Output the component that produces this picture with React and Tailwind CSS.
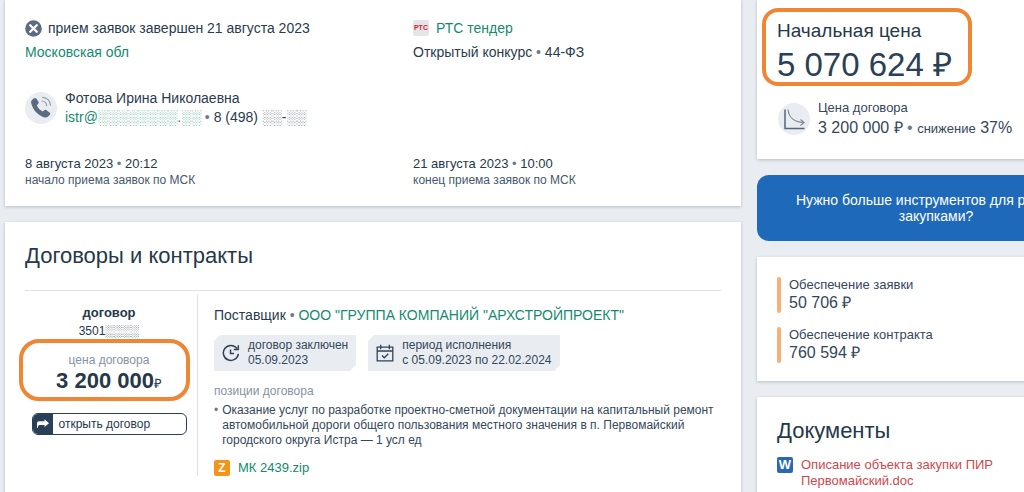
import React from "react";

function Card({ className = "", children }) {
  return (
    <section className={`bg-white shadow-[0_1px_3px_rgba(60,80,100,0.3)] ${className}`}>{children}</section>
  );
}

function Dot() {
  return <span className="text-[#6b7a8c]">•</span>;
}

function CloseIcon() {
  return (
    <svg viewBox="0 0 17 17" className="size-[17px] shrink-0" aria-hidden="true">
      <circle cx="8.5" cy="8.5" r="8.3" fill="#5b6b80" />
      <path d="M5.2 5.2l6.6 6.6M11.8 5.2l-6.6 6.6" stroke="#fff" strokeWidth="2.3" strokeLinecap="round" />
    </svg>
  );
}

function PhoneIcon() {
  return (
    <svg viewBox="0 0 32 32" className="size-8 shrink-0" aria-hidden="true">
      <circle cx="16" cy="16" r="16" fill="#e9edf2" />
      <path
        d="M8.600 6.600c1-1 2.100-.9 2.800.1l1.900 2.900c.6 1 .4 1.800-.4 2.600l-1.100 1.100c1.200 2.700 3.200 4.900 5.900 6.300l1.300-1.200c.8-.7 1.600-.8 2.500-.2l3 2.200c1 .8 1 1.800.1 2.700l-1.500 1.500c-1 1-2.600 1.300-4.300.7C12.700 23 7.900 18 6.300 11.600c-.4-1.600-.2-2.800.7-3.600z"
        fill="#5b6b80"
      />
      <path d="M17 9c2.600.2 4.400 2 4.700 4.600M17.500 5.300c4.400.3 7.500 3.400 7.900 7.900" fill="none" stroke="#98a3b1" strokeWidth="1.200" strokeLinecap="round" />
    </svg>
  );
}

function DeclineIcon() {
  return (
    <svg viewBox="0 0 32 32" className="size-8 shrink-0" aria-hidden="true">
      <circle cx="16" cy="16" r="16" fill="#e9edf2" />
      <path d="M7 6.500V25.500h19.500" fill="none" stroke="#55657a" strokeWidth="1.500" />
      <path d="M10 6.500C11 14.500 15 19 25.500 19.500M22.500 16.500l3.500 3-3.500 3" fill="none" stroke="#7d8a9b" strokeWidth="1.200" />
    </svg>
  );
}

function ClockIcon() {
  return (
    <svg viewBox="0 0 18 18" className="size-[18px] shrink-0" fill="none" stroke="#2f4358" strokeWidth="1.500" aria-hidden="true">
      <path d="M16.300 9.800A7.500 7.500 0 1 1 15 4.600" />
      <path d="M16.300 1.200v4.300h-4.500M8.500 5.500v4h3.500" />
    </svg>
  );
}

function CalendarIcon() {
  return (
    <svg viewBox="0 0 18 18" className="size-[18px] shrink-0" fill="none" stroke="#2f4358" strokeWidth="1.300" aria-hidden="true">
      <path d="M1.200 3.200h15.600v13.600H1.200zM1.200 7h15.600M4.700.7v4.600M13.300.7v4.600M6 11.500l2.300 2.300 4-4" />
    </svg>
  );
}

function ArrowIcon() {
  return (
    <svg viewBox="0 0 12 10" className="h-[10px] w-3" aria-hidden="true">
      <path d="M0 9V4.500C0 3 .8 2.300 2.300 2.300h5.200V.3L12 4.200 7.500 8V6H2.800C1.500 6 .8 7 .6 9z" fill="#fff" />
    </svg>
  );
}

function Badge({ className, children }) {
  return (
    <span className={`flex size-4 shrink-0 items-center justify-center rounded-xs font-bold ${className}`}>
      {children}
    </span>
  );
}

function Tag({ icon, label, value }) {
  return (
    <div className="relative flex h-9 items-center gap-2 bg-[#e9edf1] px-2 text-[12px] leading-[15px] text-[#34475b]">
      {icon}
      <div>
        <div>{label}</div>
        <div>{value}</div>
      </div>
      <svg viewBox="0 0 8 8" className="absolute top-0 left-0 size-1.5" aria-hidden="true">
        <path d="M0 0h8L0 8z" fill="#fff" />
      </svg>
      <svg viewBox="0 0 8 8" className="absolute right-0 bottom-0 size-1.5" aria-hidden="true">
        <path d="M8 0v8H0z" fill="#fff" />
      </svg>
    </div>
  );
}

function Security({ label, value }) {
  return (
    <div className="flex gap-2">
      <span className="w-1 rounded-xs bg-[#f6b077]" />
      <div>
        <div className="text-[13px] leading-4">{label}</div>
        <div className="text-[16px] leading-5">{value}</div>
      </div>
    </div>
  );
}

function Period({ date, time, label }) {
  return (
    <div>
      <div className="text-[13px] leading-4 text-[#26384a]">
        {date} <Dot /> {time}
      </div>
      <div className="text-[12px] leading-4 text-[#46586c]">{label}</div>
    </div>
  );
}

function Summary() {
  return (
    <Card className="px-5 pt-4 pb-[18px]">
      <div className="grid grid-cols-[388px_1fr] text-[14px] leading-6 text-[#2a3b4d]">
        <div>
          <div className="flex items-center gap-[6px]">
            <CloseIcon />
            <span>прием заявок завершен 21 августа 2023</span>
          </div>
          <a href="#region" className="text-[#148a70]">Московская обл</a>
        </div>
        <div>
          <div className="flex items-center gap-[7px]">
            <Badge className="bg-[#e3e5e8] text-[7px] text-[#d8232f]">РТС</Badge>
            <a href="#rts" className="text-[#148a70]">РТС тендер</a>
          </div>
          <div>
            Открытый конкурс <Dot /> 44-ФЗ
          </div>
        </div>
      </div>
      <div className="mt-[25px] flex items-center gap-2 text-[14px] leading-[19px] text-[#2a3b4d]">
        <PhoneIcon />
        <div>
          <div>Фотова Ирина Николаевна</div>
          <div>
            <a href="#mail" className="text-[#148a70]">istr@░░░░░░░░.░░</a> <Dot /> 8 (498) ░░-░░
          </div>
        </div>
      </div>
      <div className="mt-[29px] grid grid-cols-[388px_1fr]">
        <Period date="8 августа 2023" time="20:12" label="начало приема заявок по МСК" />
        <Period date="21 августа 2023" time="10:00" label="конец приема заявок по МСК" />
      </div>
    </Card>
  );
}

function Contracts() {
  return (
    <Card className="px-5 pt-5 pb-5">
      <h2 className="text-[22px] leading-7 text-[#26384a]">Договоры и контракты</h2>
      <div className="mt-5 flex border-t border-[#dfe3e7] pt-1">
        <div className="flex w-[173px] shrink-0 flex-col items-center border-r border-[#dfe3e7] pt-2 pr-1 text-[#26384a]">
          <div className="text-[13px] leading-5 font-bold">договор</div>
          <div className="text-[12px] leading-4">3501░░░░</div>
          <div className="-ml-[10px] flex h-[62px] w-[171px] flex-col items-center rounded-[20px] border-4 border-[#ee8636] pt-2 pl-[10px]">
            <div className="text-[12px] leading-[18px] text-[#8792a0]">цена договора</div>
            <div className="text-[22px] leading-6 font-bold">
              3 200 000<span className="text-[13px] font-normal">₽</span>
            </div>
          </div>
          <button type="button" className="mt-3 flex h-[22px] w-[155px] items-center overflow-hidden rounded-md border border-[#2a4058] text-[12px]">
            <span className="flex h-full w-5 items-center justify-center bg-[#2a4058]">
              <ArrowIcon />
            </span>
            <span className="pl-[6px]">открыть договор</span>
          </button>
        </div>
        <div className="pt-2 pl-4">
          <div className="text-[14px] leading-6 text-[#2a3b4d]">
            Поставщик <Dot /> <a href="#supplier" className="text-[#148a70]">ООО "ГРУППА КОМПАНИЙ "АРХСТРОЙПРОЕКТ"</a>
          </div>
          <div className="mt-2 flex gap-3">
            <Tag icon={<ClockIcon />} label="договор заключен" value="05.09.2023" />
            <Tag icon={<CalendarIcon />} label="период исполнения" value="с 05.09.2023 по 22.02.2024" />
          </div>
          <div className="mt-3 text-[12px] leading-4 text-[#8792a0]">позиции договора</div>
          <div className="mt-1 flex gap-1 text-[12px] leading-[15px] text-[#34475b]">
            <Dot />
            <p>
              Оказание услуг по разработке проектно-сметной документации на капитальный ремонт автомобильной дороги
              общего пользования местного значения в п. Первомайский городского округа Истра — 1 усл ед
            </p>
          </div>
          <div className="mt-3 flex items-center gap-2">
            <Badge className="bg-[#f39419] text-[12px] text-white">Z</Badge>
            <a href="#zip" className="text-[13px] leading-4 text-[#148a70]">МК 2439.zip</a>
          </div>
        </div>
      </div>
    </Card>
  );
}

export default function App() {
  return (
    <div className="h-screen overflow-hidden bg-[#e9edf1] font-['Liberation_Sans',Arial,sans-serif] text-[#34475b]">
      <div className="grid grid-cols-[minmax(736px,1fr)_358px] gap-4 pl-[5px]">
        <main className="flex flex-col gap-4">
          <Summary />
          <Contracts />
        </main>
        <aside className="flex flex-col gap-4">
          <Card className="pt-2 pb-5 pl-[5px]">
            <div className="h-[78px] w-[210px] rounded-[16px] border-4 border-[#ee8636] px-[11px] pt-[7px] text-[#26384a]">
              <div className="text-[19px] leading-6">Начальная цена</div>
              <div className="text-[33px] leading-[43px] whitespace-nowrap text-[#2a4058]">5 070 624 ₽</div>
            </div>
            <div className="mt-3 ml-4 flex items-center gap-2">
              <DeclineIcon />
              <div>
                <div className="text-[13px] leading-5">Цена договора</div>
                <div className="text-[16px] leading-5">
                  3 200 000 ₽ <Dot /> <span className="text-[13px]">снижение</span> 37%
                </div>
              </div>
            </div>
          </Card>
          <button type="button" className="h-[66px] rounded-xl bg-[#1e69b9] px-9 text-[14px] leading-4 text-white">
            Нужно больше инструментов для работы с закупками?
          </button>
          <Card className="flex flex-col gap-[14px] px-5 pt-5 pb-[18px]">
            <Security label="Обеспечение заявки" value="50 706 ₽" />
            <Security label="Обеспечение контракта" value="760 594 ₽" />
          </Card>
          <Card className="px-5 pt-5 pb-5">
            <h2 className="text-[22px] leading-7 text-[#26384a]">Документы</h2>
            <div className="mt-3 flex gap-2">
              <Badge className="bg-[#2b68b0] text-[13px] text-white">W</Badge>
              <a href="#doc" className="w-[200px] text-[13px] leading-4 text-[#cf474d]">
                Описание объекта закупки ПИР Первомайский.doc
              </a>
            </div>
          </Card>
        </aside>
      </div>
    </div>
  );
}
